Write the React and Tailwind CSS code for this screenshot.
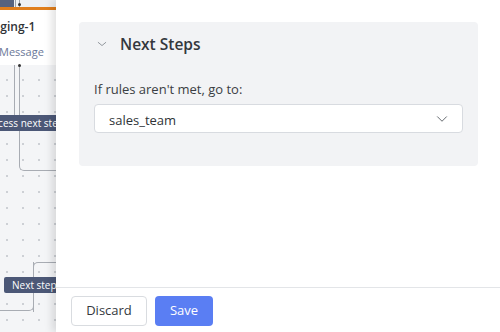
import React from "react";

function Chevron({ className, d = "M2 5l6 5 6-5", sw = 1.3 }) {
  return (
    <svg className={className} viewBox="0 0 16 16" fill="none" stroke="currentColor" strokeWidth={sw} strokeLinecap="round" strokeLinejoin="round">
      <path d={d} />
    </svg>
  );
}

function Label({ className, children, textClass }) {
  return (
    <div className={`absolute h-[16px] bg-[#4c5877] text-white text-[10px] leading-[16px] whitespace-nowrap overflow-hidden ${className}`}>
      <span className={`relative ${textClass}`}>{children}</span>
    </div>
  );
}

function Canvas() {
  return (
    <div
      className="relative w-[56px] h-full overflow-hidden bg-[#f4f5f7] shrink-0"
      style={{ backgroundImage: "radial-gradient(#cdd0d5 0.9px, transparent 1.1px)", backgroundSize: "16px 16px", backgroundPosition: "-1px -8px" }}
    >
      {/* top strip of node above */}
      <div className="absolute left-0 top-0 w-full h-[7px] bg-[#eef0f3]">
        <div className="absolute left-0 top-0 w-[14px] h-[7px] bg-[#56627e]" />
        <div className="absolute left-[15px] top-0 w-px h-[7px] bg-[#9aa0aa]" />
        <div className="absolute left-[19px] top-0 w-px h-[7px] bg-[#9aa0aa]" />
        <div className="absolute left-[18px] top-[3px] w-[3px] h-[3px] rounded-full bg-[#333]" />
      </div>
      <div className="absolute left-0 top-[7px] w-full h-[3px] bg-[#e07e1c]" />
      {/* node card */}
      <div className="absolute left-0 top-[10px] w-full h-[55px] bg-white">
        <div className="absolute left-[-18px] top-[9px] text-[12px] leading-[16px] font-semibold text-[#2f3337] whitespace-nowrap">Staging-1</div>
        <div className="absolute left-[-1px] top-[34px] text-[11px] leading-[15px] text-[#6b7899] whitespace-nowrap">Message</div>
      </div>
      {/* connectors */}
      <div className="absolute left-[14px] top-[65px] w-px h-[50px] bg-[#a8acb3]" />
      <div className="absolute left-[19px] top-[65px] w-[40px] h-[106px] border-l border-b border-[#a8acb3] rounded-bl-[5px]" />
      <div className="absolute left-[18px] top-[64px] w-[3px] h-[3px] rounded-full bg-[#333]" />
      <Label className="left-0 top-[115px] w-full" textClass="left-[-18px]">Process next step</Label>
      <div className="absolute left-[33px] top-[262px] w-[30px] h-[50px] border-l border-t border-[#a8acb3] rounded-tl-[5px]" />
      <div className="absolute left-[-10px] top-[262px] w-[44px] h-[49px] border-r border-b border-[#a8acb3] rounded-br-[5px]" />
      <Label className="left-[4px] top-[277px] w-[60px] rounded-l-[2px]" textClass="left-[8px]">Next step</Label>
    </div>
  );
}

export default function App() {
  return (
    <div className="flex w-[500px] h-[332px] overflow-hidden bg-white font-['Open_Sans',sans-serif]">
      <Canvas />
      <div className="relative flex-1 flex flex-col bg-white shadow-[-4px_0_8px_rgba(0,0,0,0.12)]">
        <div className="flex-1 pl-[23px] pr-[22px] pt-[22px]">
          <div className="bg-[#f2f3f5] rounded-[4px] h-[144px] pl-[15px] pr-[15px] pt-[12px]">
            <div className="flex items-center gap-[13px] pl-[3px]">
              <Chevron className="w-[10px] h-[10px] text-[#8d9299]" d="M2 5.5l6 5 6-5" sw={1.5} />
              <span className="text-[15.5px] leading-[20px] font-semibold text-[#34383d]">Next Steps</span>
            </div>
            <div className="mt-[26px] text-[13px] leading-[18px] text-[#3a3e43]">If rules aren't met, go to:</div>
            <div className="mt-[6px] h-[29px] bg-white border border-[#d8dbe0] rounded-[4px] flex items-center justify-between pl-[14px] pr-[14px] pt-[2px]">
              <span className="text-[13px] leading-[18px] text-[#2f3337]">sales_team</span>
              <Chevron className="w-[12px] h-[12px] text-[#555a60] -mt-[2px]" d="M2 5l6 6 6-6" sw={1.2} />
            </div>
          </div>
        </div>
        <div className="h-[45px] border-t border-[#e3e5e8] flex items-start gap-[8px] pl-[15px] pt-[8px]">
          <button className="h-[30px] w-[76px] rounded-[4px] border border-[#d9dce0] bg-white text-[13px] text-[#34383d]">Discard</button>
          <button className="h-[30px] w-[58px] rounded-[4px] bg-[#5a7ef3] text-[13px] text-white">Save</button>
        </div>
      </div>
    </div>
  );
}
